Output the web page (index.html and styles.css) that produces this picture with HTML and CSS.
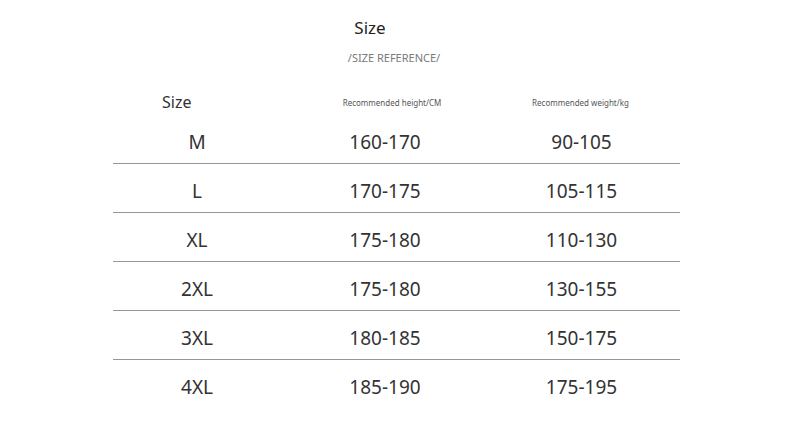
FILE: index.html
```html
<!DOCTYPE html>
<html lang="en">
<head>
<meta charset="utf-8">
<title>Size</title>
<link rel="stylesheet" href="styles.css">
</head>
<body>
<div class="page">
  <h1 class="title">Size</h1>
  <p class="subtitle">/SIZE REFERENCE/</p>
  <div class="table">
    <div class="head">
      <div class="h-size">Size</div>
      <div class="h-height">Recommended height/CM</div>
      <div class="h-weight">Recommended weight/kg</div>
    </div>
    <div class="row"><div>M</div><div>160-170</div><div class="w">90-105</div></div>
    <div class="row"><div>L</div><div>170-175</div><div class="w">105-115</div></div>
    <div class="row"><div>XL</div><div>175-180</div><div class="w">110-130</div></div>
    <div class="row"><div>2XL</div><div>175-180</div><div class="w">130-155</div></div>
    <div class="row"><div>3XL</div><div>180-185</div><div class="w">150-175</div></div>
    <div class="row last"><div>4XL</div><div>185-190</div><div class="w">175-195</div></div>
  </div>
</div>
</body>
</html>
```
FILE: styles.css
```css
html, body {
  margin: 0;
  padding: 0;
  background: #ffffff;
}
body {
  font-family: "Noto Sans", "Open Sans", sans-serif;
  color: #2b2b2b;
}
.page {
  width: 790px;
  height: 444px;
  display: flex;
  flex-direction: column;
  align-items: center;
}
.title {
  margin: 17px 0 0 -50px;
  font-size: 17px;
  font-weight: 400;
  line-height: 22px;
  color: #222;
}
.subtitle {
  margin: 12px 0 0 -2px;
  font-size: 11px;
  line-height: 14px;
  color: #7a7a7a;
}
.table {
  width: 567px;
  margin: 24px 0 0 3px;
  display: flex;
  flex-direction: column;
}
.head {
  display: grid;
  grid-template-columns: 168px 208px 191px;
  height: 26px;
  align-items: center;
}
.h-size {
  padding-left: 49px;
  font-size: 16px;
  color: #333;
}
.h-height, .h-weight {
  font-size: 8px;
  color: #555;
  text-align: center;
}
.h-height { padding-left: 14px; }
.h-weight { padding-right: 8px; }
.row {
  display: grid;
  grid-template-columns: 168px 208px 191px;
  height: 49px;
  box-sizing: border-box;
  padding-top: 14px;
  border-bottom: 1px solid #969696;
  font-size: 19px;
  line-height: 26px;
  color: #333;
}
.row > div {
  text-align: center;
}
.row > .w {
  padding-right: 6px;
}
.row.last {
  border-bottom: none;
}
```
